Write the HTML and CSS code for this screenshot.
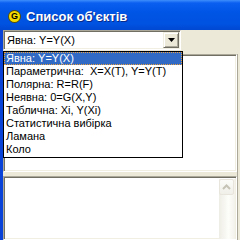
FILE: index.html
```html
<!DOCTYPE html>
<html lang="uk">
<head>
  <meta charset="UTF-8">
  <title>Список об'єктів</title>
  <link rel="stylesheet" href="styles.css">
</head>
<body>
  <div class="window">
    <div class="titlebar">
      <span class="app_icon">G</span>
      <span class="title">Список об'єктів</span>
    </div>
    <div class="client">
      <div class="combo">
        <span class="combo_value">Явна: Y=Y(X)</span>
        <span class="combo_btn">
          <svg width="7" height="4" viewBox="0 0 7 4"><path d="M0 0h7L3.5 4z" fill="#000"/></svg>
        </span>
      </div>
      <div class="panels">
        <div class="objects"></div>
        <div class="details">
          <div class="vscroll">
            <span class="scroll_up">
              <svg width="9" height="6" viewBox="0 0 9 6"><path d="M1 5l3.5-3.5L8 5" fill="none" stroke="#c5c3b6" stroke-width="2"/></svg>
            </span>
          </div>
        </div>
      </div>
      <ul class="dropdown">
        <li class="selected">Явна: Y=Y(X)</li>
        <li>Параметрична:&nbsp; X=X(T), Y=Y(T)</li>
        <li>Полярна: R=R(F)</li>
        <li>Неявна: 0=G(X,Y)</li>
        <li>Таблична: Xi, Y(Xi)</li>
        <li>Статистична вибірка</li>
        <li>Ламана</li>
        <li>Коло</li>
      </ul>
    </div>
  </div>
</body>
</html>
```

FILE: styles.css
```css
html,body{
  margin:0;
  width:240px;
  height:240px;
  overflow:hidden;
}
body{
  font-family:"Liberation Sans", Arial, sans-serif;
  font-size:11px;
  background:#ECE9D8;
}
.window{
  height:240px;
  display:flex;
  flex-direction:column;
}
.titlebar{
  height:30px;
  box-sizing:border-box;
  padding:3px 0 0 9px;
  flex:none;
  display:flex;
  align-items:center;
  background:linear-gradient(#3d8ffc 0, #0a5ef0 3px, #0055e6 40%, #0052e0 80%, #0048d2 100%);
}
.app_icon{
  width:11px;
  height:11px;
  border-radius:50%;
  background:#f4dc00;
  box-shadow:0 0 0 1px #5a5000;
  font-size:9px;
  font-weight:bold;
  line-height:11px;
  text-align:center;
  color:#000;
}
.title{
  margin-left:6px;
  color:#fff;
  font-weight:bold;
  font-size:13px;
  text-shadow:1px 1px 0 #0a2a8a;
}
.client{
  flex:1;
  position:relative;
  border-left:3px solid #0842d6;
  display:flex;
  flex-direction:column;
}
.combo{
  width:178px;
  height:20px;
  box-sizing:border-box;
  background:#fff;
  border-top:1px solid #aca899;
  border-left:1px solid #aca899;
  border-right:1px solid #fff;
  border-bottom:1px solid #fff;
  box-shadow:inset 1px 1px 0 #716f64, inset -1px -1px 0 #f1efe2;
  display:flex;
  align-items:center;
  padding:1px 1px 1px 2px;
}
.combo_value{
  flex:1;
  padding-left:1px;
  color:#000;
}
.combo_btn{
  width:16px;
  height:16px;
  box-sizing:border-box;
  background:#ECE9D8;
  border-top:1px solid #f1efe2;
  border-left:1px solid #f1efe2;
  border-right:1px solid #716f64;
  border-bottom:1px solid #716f64;
  box-shadow:inset 1px 1px 0 #fff, inset -1px -1px 0 #aca899;
  display:flex;
  align-items:center;
  justify-content:center;
}
.panels{
  flex:1;
  margin-top:4px;
  width:234px;
  display:flex;
  flex-direction:column;
  gap:4px;
  border-right:1px solid #aca899;
}
.objects,.details{
  background:#fff;
  border-top:1px solid #aca899;
  border-left:1px solid #aca899;
  border-right:1px solid #fff;
  border-bottom:1px solid #fff;
  box-shadow:inset 1px 1px 0 #716f64, inset -1px -1px 0 #f1efe2;
}
.objects{
  height:116px;
}
.details{
  flex:1;
  display:flex;
  justify-content:flex-end;
  padding:2px 1px 0 2px;
}
.vscroll{
  width:16px;
  background:linear-gradient(90deg, #eeede5, #fdfdfa 60%, #f3f1ea);
}
.scroll_up{
  display:flex;
  width:15px;
  height:16px;
  box-sizing:border-box;
  border:1px solid #e8e6dc;
  border-radius:2px;
  background:linear-gradient(#fbfbf9, #f0efe8);
  align-items:center;
  justify-content:center;
}
.dropdown{
  position:absolute;
  left:0;
  top:21px;
  width:180px;
  height:107px;
  box-sizing:border-box;
  margin:0;
  padding:0;
  list-style:none;
  background:#fff;
  border:1px solid #000;
}
.dropdown li{
  height:13px;
  line-height:13px;
  padding-left:2px;
  white-space:nowrap;
  color:#000;
  box-sizing:border-box;
}
.dropdown li.selected{
  background:#316ac5;
  color:#fff;
  outline:1px dotted #e8a040;
  outline-offset:-1px;
}
```
